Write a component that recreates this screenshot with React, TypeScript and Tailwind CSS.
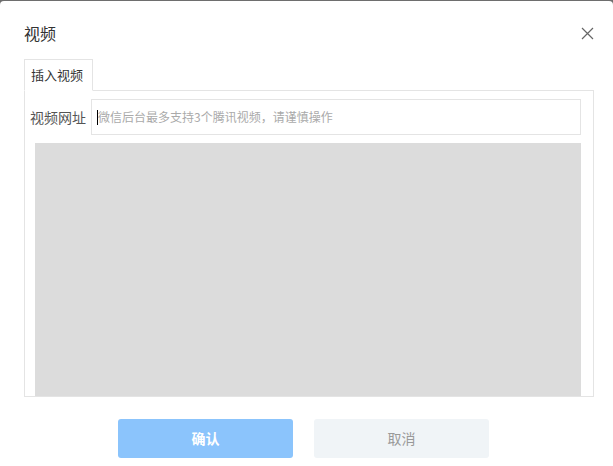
import React from 'react';

const FONT = { fontFamily: '"Noto Sans CJK SC", "Liberation Sans", sans-serif' };

const CloseIcon: React.FC = () => (
  <svg width="13" height="13" viewBox="0 0 13 13" fill="none">
    <path d="M1 1 L12 12 M12 1 L1 12" stroke="#666" strokeWidth="1.2" />
  </svg>
);

export default function App() {
  return (
    <div className="w-[613px] h-[466px] bg-[#6e6e6e] overflow-hidden" style={FONT}>
      <div className="mt-px h-[465px] bg-white rounded-tl-[4px] rounded-tr-[4px] flex flex-col">
        {/* Header */}
        <div className="flex items-center justify-between pl-6 pr-[19px] pt-[18px] h-[58px] pb-[12px]">
          <h1 className="text-[16px] leading-6 text-[#333]">视频</h1>
          <button className="w-[14px] h-[14px] flex items-center justify-center">
            <CloseIcon />
          </button>
        </div>

        {/* Tabs */}
        <div className="ml-6 mr-[19px] flex flex-col">
          <div className="flex">
            <div className="h-[32px] px-[6px] w-[69px] border border-[#e4e4e4] border-b-white bg-white -mb-px relative z-10 flex items-center text-[13px] text-[#333]">
              插入视频
            </div>
          </div>
          <div className="h-[307px] border border-[#e4e4e4] pt-[8px] pr-[12px] flex flex-col">
            <div className="flex items-center">
              <span className="pl-[5px] w-[66px] text-[14px] text-[#555]">视频网址</span>
              <div className="flex-1 h-[36px] border border-[#e4e4e4] flex items-center pl-[5px]">
                <span className="w-px h-[15px] bg-black"></span>
                <span className="text-[12px] text-[#aaa]">微信后台最多支持3个腾讯视频，请谨慎操作</span>
              </div>
            </div>
            <div className="ml-[10px] mt-[8px] flex-1 bg-[#dcdcdc]"></div>
          </div>
        </div>

        {/* Footer */}
        <div className="flex justify-center gap-[21px] mt-[22px] pr-[6px]">
          <button className="w-[175px] h-[39px] rounded-[3px] bg-[#8bc4fc] text-white text-[14px] font-bold">确认</button>
          <button className="w-[175px] h-[39px] rounded-[3px] bg-[#f0f4f7] text-[#999] text-[14px]">取消</button>
        </div>
      </div>
    </div>
  );
}
